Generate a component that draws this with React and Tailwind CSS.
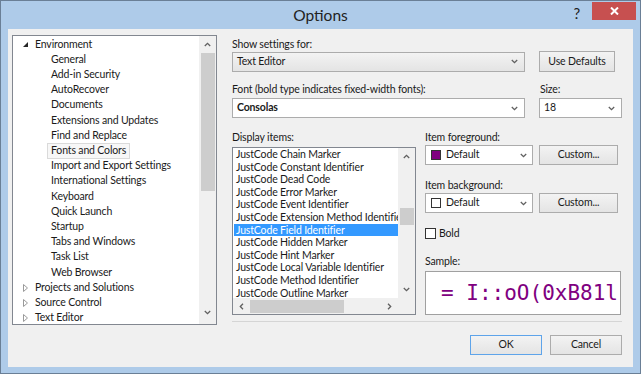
import React from "react";

function Chev({ dir = "down", color = "#606060" }) {
  if (dir === "down" || dir === "up") {
    const d = dir === "down" ? "M0.8 1 L3.5 3.7 L6.2 1" : "M0.8 4 L3.5 1.3 L6.2 4";
    return (
      <svg width="7" height="5" viewBox="0 0 7 5">
        <path d={d} fill="none" stroke={color} strokeWidth="1.3" />
      </svg>
    );
  }
  const d = dir === "left" ? "M4 0.8 L1.3 3.5 L4 6.2" : "M1 0.8 L3.7 3.5 L1 6.2";
  return (
    <svg width="5" height="7" viewBox="0 0 5 7">
      <path d={d} fill="none" stroke={color} strokeWidth="1.3" />
    </svg>
  );
}

const treeChildren = [
  "General",
  "Add-in Security",
  "AutoRecover",
  "Documents",
  "Extensions and Updates",
  "Find and Replace",
  "Fonts and Colors",
  "Import and Export Settings",
  "International Settings",
  "Keyboard",
  "Quick Launch",
  "Startup",
  "Tabs and Windows",
  "Task List",
  "Web Browser",
];

const collapsed = ["Projects and Solutions", "Source Control", "Text Editor"];

const items = [
  "JustCode Chain Marker",
  "JustCode Constant Identifier",
  "JustCode Dead Code",
  "JustCode Error Marker",
  "JustCode Event Identifier",
  "JustCode Extension Method Identifier",
  "JustCode Field Identifier",
  "JustCode Hidden Marker",
  "JustCode Hint Marker",
  "JustCode Local Variable Identifier",
  "JustCode Method Identifier",
  "JustCode Outline Marker",
];

function Button({ children, w, primary }) {
  return (
    <div
      className={`h-[20px] flex items-center justify-center border bg-linear-to-b from-[#f3f3f3] to-[#e4e4e4] ${
        primary ? "border-[#5ea4ea]" : "border-[#acacac]"
      }`}
      style={{ width: w }}
    >
      {children}
    </div>
  );
}

function ColorCombo({ swatch }) {
  return (
    <div className="w-[108px] h-[20px] border border-[#acacac] bg-white flex items-center pl-[5px] pr-[5px]">
      <div className={`w-[10px] h-[10px] border border-[#333] ${swatch}`} />
      <span className="ml-[5px] flex-1">Default</span>
      <Chev />
    </div>
  );
}

export default function App() {
  return (
    <div className="w-[644px] h-[379px] bg-white [font-family:Lato,sans-serif] text-[10.5px] tracking-[-0.15px] text-[#1a1a1a]">
      <div className="w-[641px] h-[374px] border border-[#6a7f96] bg-[#aecbe9] flex flex-col">
        {/* Title bar */}
        <div className="h-[28px] grid grid-cols-[1fr_auto_1fr] items-start">
          <div />
          <div className="text-[15.5px] tracking-normal leading-[28px] text-[#222]">Options</div>
          <div className="flex justify-end items-start">
            <span className="text-[15px] leading-[15px] mt-[5px] mr-[12px] text-[#222]">?</span>
            <div className="w-[44px] h-[18px] mt-[1px] mr-[4px] bg-[#c75050] flex items-center justify-center">
              <svg width="9" height="8" viewBox="0 0 9 8">
                <path d="M1 0.5 L8 7.5 M8 0.5 L1 7.5" stroke="white" strokeWidth="2" />
              </svg>
            </div>
          </div>
        </div>

        {/* Content */}
        <div className="mx-[7px] mb-[6px] flex-1 bg-[#f0f0f0] flex pl-[4px] pt-[6px]">
          {/* Tree */}
          <div className="w-[205px] h-[290px] border border-[#828790] bg-white flex overflow-hidden">
            <div className="flex-1 pt-[1px] overflow-hidden">
              <div className="h-[15.2px] flex items-center pl-[10px]">
                <svg width="5" height="5" viewBox="0 0 5 5">
                  <path d="M5 0 L5 5 L0 5 Z" fill="#262626" />
                </svg>
                <span className="ml-[7px] leading-[15px]">Environment</span>
              </div>
              {treeChildren.map((t) => (
                <div key={t} className="h-[15.2px] flex items-stretch pl-[34px]">
                  <span
                    className={`border px-[3px] flex items-center whitespace-nowrap ${
                      t === "Fonts and Colors" ? "border-[#dadada] bg-[#f7f7f7]" : "border-transparent"
                    }`}
                  >
                    {t}
                  </span>
                </div>
              ))}
              {collapsed.map((t) => (
                <div key={t} className="h-[15.2px] flex items-center pl-[10px]">
                  <svg width="5" height="8" viewBox="0 0 5 8">
                    <path d="M0.5 0.5 L4.5 4 L0.5 7.5 Z" fill="none" stroke="#9a9a9a" strokeWidth="1" />
                  </svg>
                  <span className="ml-[7px] whitespace-nowrap">{t}</span>
                </div>
              ))}
            </div>
            <div className="w-[17px] bg-[#f0f0f0] flex flex-col items-center">
              <div className="h-[17px] flex items-center justify-center">
                <Chev dir="up" />
              </div>
              <div className="w-[14px] h-[138px] bg-[#cdcdcd]" />
              <div className="flex-1" />
              <div className="h-[19px] flex items-start justify-center pt-[5px]">
                <Chev dir="down" />
              </div>
            </div>
          </div>

          {/* Right column */}
          <div className="ml-[15px] w-[391px] pt-[2px] flex flex-col">
            <div className="h-[14px] leading-[14px]">Show settings for:</div>
            <div className="h-[21px] flex items-center">
              <div className="w-[293px] h-[20px] border border-[#acacac] bg-linear-to-b from-[#f3f3f3] to-[#e4e4e4] flex items-center pl-[4px] pr-[6px]">
                <span className="flex-1">Text Editor</span>
                <Chev />
              </div>
              <div className="ml-[14px] w-[76px] h-[21px] border border-[#acacac] bg-linear-to-b from-[#f3f3f3] to-[#e4e4e4] flex items-center justify-center">
                Use Defaults
              </div>
            </div>

            <div className="mt-[10px] h-[15px] leading-[15px] flex">
              <span className="w-[308px]">Font (bold type indicates fixed-width fonts):</span>
              <span>Size:</span>
            </div>
            <div className="mt-[1px] h-[20px] flex">
              <div className="w-[293px] h-[20px] border border-[#acacac] bg-white flex items-center pl-[4px] pr-[6px]">
                <span className="flex-1 font-bold">Consolas</span>
                <Chev />
              </div>
              <div className="ml-[14px] w-[83px] h-[20px] border border-[#acacac] bg-white flex items-center pl-[4px] pr-[6px]">
                <span className="flex-1">18</span>
                <Chev />
              </div>
            </div>

            <div className="mt-[12px] flex">
              {/* Display items */}
              <div className="w-[184px] flex flex-col">
                <div className="h-[15px] leading-[15px]">Display items:</div>
                <div className="mt-[2px] w-[184px] h-[168px] border border-[#828790] bg-white flex flex-col">
                  <div className="flex flex-1 min-h-0">
                    <div className="flex-1 min-w-0 overflow-hidden">
                      {items.map((t) => {
                        const sel = t === "JustCode Field Identifier";
                        return (
                          <div
                            key={t}
                            className={`h-[12.6px] leading-[12.6px] ml-[1px] pl-[2px] whitespace-nowrap overflow-hidden ${
                              sel ? "bg-[#3399ff] text-white" : ""
                            }`}
                          >
                            {t}
                          </div>
                        );
                      })}
                    </div>
                    <div className="w-[17px] bg-[#f0f0f0] flex flex-col items-center">
                      <div className="h-[17px] flex items-center justify-center">
                        <Chev dir="up" />
                      </div>
                      <div className="mt-[43px] w-[14px] h-[17px] bg-[#cdcdcd]" />
                      <div className="flex-1" />
                      <div className="h-[17px] flex items-center justify-center">
                        <Chev dir="down" />
                      </div>
                    </div>
                  </div>
                  <div className="h-[16px] flex bg-[#f0f0f0]">
                    <div className="w-[17px] flex items-center justify-center">
                      <Chev dir="left" />
                    </div>
                    <div className="flex items-center">
                      <div className="w-[94px] h-[13px] bg-[#cdcdcd]" />
                    </div>
                    <div className="flex-1" />
                    <div className="w-[17px] flex items-center justify-center">
                      <Chev dir="right" />
                    </div>
                    <div className="w-[17px]" />
                  </div>
                </div>
              </div>

              {/* Right sub column */}
              <div className="ml-[9px] flex flex-col">
                <div className="h-[15px] leading-[15px]">Item foreground:</div>
                <div className="h-[20px] flex">
                  <ColorCombo swatch="bg-[#800080]" />
                  <div className="ml-[6px]">
                    <Button w={79}>Custom...</Button>
                  </div>
                </div>
                <div className="mt-[13px] h-[15px] leading-[15px]">Item background:</div>
                <div className="h-[20px] flex">
                  <ColorCombo swatch="bg-white" />
                  <div className="ml-[6px]">
                    <Button w={79}>Custom...</Button>
                  </div>
                </div>
                <div className="mt-[13px] h-[15px] flex items-center">
                  <div className="w-[11px] h-[11px] border border-[#333] bg-white" />
                  <span className="ml-[3px]">Bold</span>
                </div>
                <div className="mt-[13px] h-[15px] leading-[15px]">Sample:</div>
                <div className="mt-[2px] w-[196px] h-[44px] border border-[#a0a0a0] bg-white overflow-hidden flex items-center pl-[15px]">
                  <span className="[font-family:'DejaVu_Sans_Mono',monospace] tracking-normal text-[21px] text-[#800080] whitespace-nowrap leading-[24px]">
                    = I::oO(0xB81l);
                  </span>
                </div>
              </div>
            </div>

            <div className="mt-[6px] w-[390px] h-[1px] bg-[#d5d5d5]" />
            <div className="mt-[13px] flex justify-end gap-[8px] pr-[1px]">
              <Button w={72} primary>
                OK
              </Button>
              <Button w={72}>Cancel</Button>
            </div>
          </div>
        </div>
      </div>
    </div>
  );
}
